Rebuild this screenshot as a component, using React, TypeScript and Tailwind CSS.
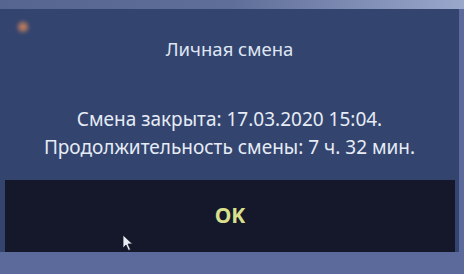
export default function App() {
  return (
    <div className="relative w-[464px] h-[274px] overflow-hidden bg-[#5b6a9a]" style={{ fontFamily: '"Noto Sans", "Open Sans", sans-serif' }}>
      <div className="h-[9px] bg-gradient-to-r from-[#56658f] via-[#5f6e98] to-[#9aa8cc]" />
      <div className="w-[459px] h-[243px] bg-[#33446f] flex flex-col">
        <div className="h-[80px] flex items-center justify-center text-[#dfe6f2] text-[18.5px] pb-[1px]">Личная смена</div>
        <div className="h-[91px] flex flex-col items-center justify-start pt-[16px] text-[#e6ecf5] text-[19px] leading-[28px]">
          <div>Смена закрыта: 17.03.2020 15:04.</div>
          <div>Продолжительность смены: 7 ч. 32 мин.</div>
        </div>
        <div className="mx-[5px] mr-[4px] flex-1 bg-[#15172b] flex items-center justify-center">
          <span className="text-[#d9e08c] font-bold text-[21px]">OK</span>
        </div>
      </div>
      <div className="absolute left-[18px] top-[22px] w-[10px] h-[10px] rounded-full bg-[#d9885a] blur-[2px] opacity-80" />
      <svg className="absolute left-[122px] top-[234px]" width="12" height="18" viewBox="0 0 12 18">
        <path d="M1 1 L1 14 L4 11 L6.5 16.5 L8.5 15.5 L6 10 L10.5 10 Z" fill="#e8ecf4" stroke="#1a1a2a" strokeWidth="0.8" />
      </svg>
    </div>
  );
}
